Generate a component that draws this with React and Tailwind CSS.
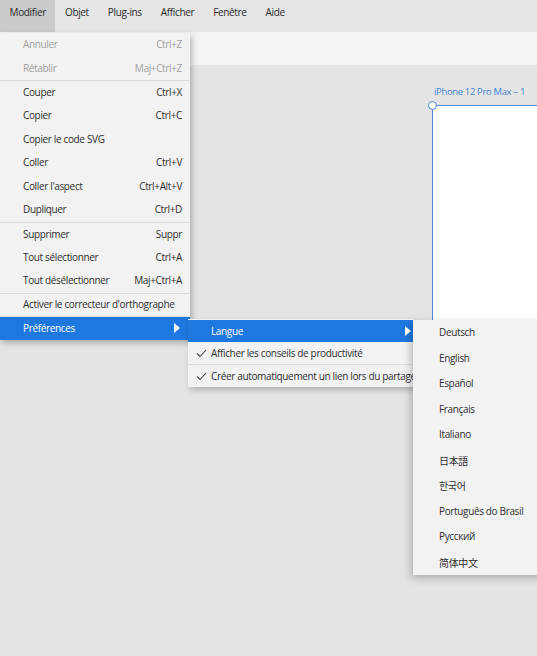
import { useState } from 'react'

const FONT = { fontFamily: '"Open Sans", "Noto Sans", "Noto Sans CJK JP", sans-serif' }

const TOP_MENUS = ['Modifier', 'Objet', 'Plug-ins', 'Afficher', 'Fenêtre', 'Aide']

// groups of the Modifier menu, separators between them
const EDIT_GROUPS = [
  [
    { label: 'Annuler', key: 'Ctrl+Z', disabled: true },
    { label: 'Rétablir', key: 'Maj+Ctrl+Z', disabled: true },
  ],
  [
    { label: 'Couper', key: 'Ctrl+X' },
    { label: 'Copier', key: 'Ctrl+C' },
    { label: 'Copier le code SVG' },
    { label: 'Coller', key: 'Ctrl+V' },
    { label: "Coller l'aspect", key: 'Ctrl+Alt+V' },
    { label: 'Dupliquer', key: 'Ctrl+D' },
  ],
  [
    { label: 'Supprimer', key: 'Suppr' },
    { label: 'Tout sélectionner', key: 'Ctrl+A' },
    { label: 'Tout désélectionner', key: 'Maj+Ctrl+A' },
  ],
  [{ label: "Activer le correcteur d'orthographe" }],
]

const LANGS = [
  { label: 'Deutsch' },
  { label: 'English' },
  { label: 'Español' },
  { label: 'Français' },
  { label: 'Italiano' },
  { label: '日本語', font: '"Noto Sans CJK JP", sans-serif' },
  { label: '한국어', font: '"Noto Sans CJK KR", sans-serif' },
  { label: 'Português do Brasil' },
  { label: 'Русский' },
  { label: '简体中文', font: '"Noto Sans CJK SC", sans-serif' },
]

function Arrow() {
  return (
    <svg width="6" height="10" viewBox="0 0 6 10" className="shrink-0">
      <path d="M0 0 L6 5 L0 10 Z" fill="#fff" />
    </svg>
  )
}

function Check() {
  return (
    <svg width="11" height="9" viewBox="0 0 11 9" className="shrink-0">
      <path d="M1 4.5 L4 7.5 L10 1" fill="none" stroke="#444" strokeWidth="1.1" />
    </svg>
  )
}

export default function App() {
  const [active] = useState('Modifier')

  return (
    <div className="relative w-[537px] h-[656px] overflow-hidden bg-[#e4e4e4] text-[#333] tracking-[-0.35px]" style={FONT}>
      {/* ── Menu bar ── */}
      <div className="flex h-[32px] bg-[#e5e5e5] text-[10px] text-[#2a2a2a]">
        {TOP_MENUS.map(m => (
          <div
            key={m}
            className={`h-full pt-[5px] px-[9.5px] ${m === active ? 'bg-[#cbcbcb]' : ''}`}
          >
            {m}
          </div>
        ))}
      </div>

      {/* ── Toolbar strip ── */}
      <div className="h-[33px] bg-[#f4f4f4]" />

      {/* ── Canvas ── */}
      <div className="relative h-[591px]">
        <div className="absolute left-[434px] top-[20px] text-[9.5px] text-[#3f86d6] whitespace-nowrap">
          iPhone 12 Pro Max – 1
        </div>
        <div className="absolute left-[432px] top-[40px] w-[200px] h-[400px] bg-white border border-[#4b8ad8]" />
        <div className="absolute left-[428px] top-[36px] w-[9px] h-[9px] rounded-full bg-white border border-[#4b8ad8]" />
      </div>

      {/* ── Modifier menu ── */}
      <div className="absolute left-0 top-[33px] w-[190px] bg-[#f2f2f2] text-[10px] shadow-[2px_3px_6px_rgba(0,0,0,0.25)]">
        {EDIT_GROUPS.map((g, gi) =>
          g.map((it, ii) => (
            <div
              key={it.label}
              className={`flex items-center justify-between h-[23.6px] pl-[23px] pr-[8px] ${
                gi > 0 && ii === 0 ? 'border-t border-[#dcdcdc]' : ''
              } ${it.disabled ? 'text-[#a0a0a0]' : 'text-[#2f2f2f]'}`}
            >
              <span className="whitespace-nowrap">{it.label}</span>
              {it.key && <span className="whitespace-nowrap">{it.key}</span>}
            </div>
          ))
        )}
        <div className="flex items-center justify-between h-[23.6px] pl-[23px] pr-[10px] border-t border-[#dcdcdc] bg-[#1f78e0] text-white">
          <span>Préférences</span>
          <Arrow />
        </div>
      </div>

      {/* ── Préférences submenu ── */}
      <div className="absolute left-[188px] top-[319px] w-[226px] bg-[#f2f2f2] text-[10px] pt-[1px] shadow-[2px_3px_6px_rgba(0,0,0,0.22)]">
        <div className="flex items-center justify-between h-[22px] pl-[23px] pr-[3px] bg-[#1f78e0] text-white">
          <span>Langue</span>
          <Arrow />
        </div>
        <div className="flex items-center gap-[4px] h-[22px] pl-[8px] text-[#2f2f2f]">
          <Check />
          <span className="whitespace-nowrap">Afficher les conseils de productivité</span>
        </div>
        <div className="flex items-center gap-[4px] h-[23px] pl-[8px] border-t border-[#dcdcdc] text-[#2f2f2f]">
          <Check />
          <span className="whitespace-nowrap">Créer automatiquement un lien lors du partage</span>
        </div>
      </div>

      {/* ── Langue submenu ── */}
      <div className="absolute left-[413px] top-[320px] w-[140px] bg-[#f2f2f2] text-[10px] text-[#2f2f2f] shadow-[-2px_3px_8px_rgba(0,0,0,0.25)]">
        {LANGS.map(l => (
          <div
            key={l.label}
            className="flex items-center h-[25.5px] pl-[26px] whitespace-nowrap"
            style={l.font ? { fontFamily: l.font } : undefined}
          >
            {l.label}
          </div>
        ))}
      </div>
    </div>
  )
}
